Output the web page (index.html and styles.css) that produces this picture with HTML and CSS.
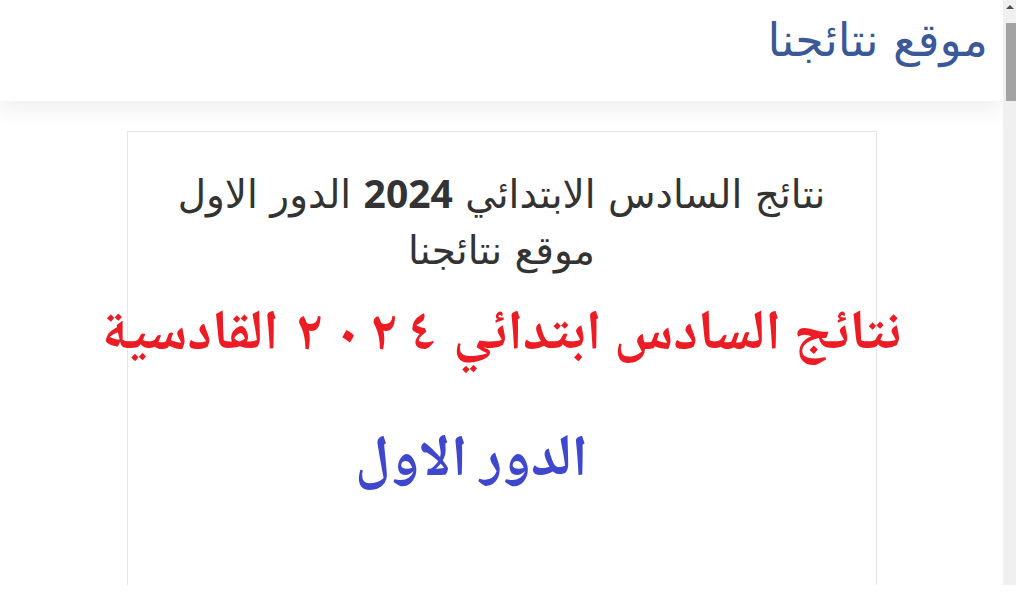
FILE: index.html
```html
<!DOCTYPE html>
<html lang="ar">
<head>
<meta charset="utf-8">
<title>موقع نتائجنا</title>
<link rel="stylesheet" href="styles.css">
</head>
<body>
<div class="window">
  <div class="page" dir="rtl">
    <header class="site-header">
      <div class="brand">موقع نتائجنا</div>
    </header>
    <main class="container">
      <article class="card">
        <h1 class="post-title">نتائج السادس الابتدائي <b>2024</b> الدور الاول<br>موقع نتائجنا</h1>
        <p class="headline-red">نتائج السادس ابتدائي <span class="digits"><span class="d">٢</span><span class="d">٠</span><span class="d">٢</span><span class="d">٤</span></span> القادسية</p>
        <p class="headline-blue">الدور الاول</p>
      </article>
    </main>
  </div>
  <div class="scrollbar">
    <div class="sb-arrow"></div>
    <div class="sb-thumb"></div>
  </div>
</div>
</body>
</html>
```

FILE: styles.css
```css
html, body {
  margin: 0;
  padding: 0;
  background: #ffffff;
}
body {
  width: 1016px;
  height: 614px;
  overflow: hidden;
}
.window {
  display: flex;
  direction: ltr;
  height: 585px;
}
.page {
  flex: 1;
  min-width: 0;
  overflow: hidden;
  background: #ffffff;
}
.scrollbar {
  width: 13px;
  background: #f0f0f0;
  display: flex;
  flex-direction: column;
  align-items: center;
}
.sb-arrow {
  width: 13px;
  height: 17px;
  display: flex;
  justify-content: center;
  padding-top: 5px;
  box-sizing: border-box;
}
.sb-arrow::before {
  content: "";
  width: 0;
  height: 0;
  border-left: 4px solid transparent;
  border-right: 4px solid transparent;
  border-bottom: 4px solid #505050;
}
.sb-thumb {
  margin-top: 6px;
  margin-left: 2px;
  width: 10px;
  height: 78px;
  background: #a3a3a3;
}
.site-header {
  height: 101px;
  background: #ffffff;
  box-shadow: 0 8px 22px rgba(0, 0, 0, 0.07);
  display: flex;
  align-items: flex-start;
  padding: 8px 15px 0 0;
  box-sizing: border-box;
  position: relative;
  z-index: 1;
}
.brand {
  font-family: "DejaVu Sans", sans-serif;
  font-size: 46px;
  color: #3b5998;
  line-height: 64px;
}
.container {
  display: flex;
  justify-content: center;
  padding-top: 30px;
}
.card {
  width: 750px;
  height: 500px;
  box-sizing: border-box;
  border: 1px solid #e6e6e6;
  padding: 33px 10px 0;
  text-align: center;
}
.post-title {
  margin: 0;
  font-family: "DejaVu Sans", sans-serif;
  font-weight: normal;
  font-size: 39px;
  line-height: 56px;
  color: #333333;
}
.post-title b {
  font-family: "Open Sans", "DejaVu Sans", sans-serif;
  font-weight: 700;
}
.headline-red {
  margin: 16px -60px 0;
  font-family: "Noto Naskh Arabic", "Amiri", "Liberation Serif", serif;
  font-weight: 700;
  font-size: 56px;
  line-height: 84px;
  color: #ec1c24;
  white-space: nowrap;
}
.headline-red .digits {
  display: inline-block;
  direction: ltr;
}
.headline-red .d {
  display: inline-block;
  margin: 0 5px;
}
.headline-blue {
  margin: 42px 0 0;
  padding-right: 60px;
  font-family: "Noto Naskh Arabic", "Amiri", "Liberation Serif", serif;
  font-weight: 700;
  font-size: 58px;
  line-height: 84px;
  color: #3f48cc;
}
```
